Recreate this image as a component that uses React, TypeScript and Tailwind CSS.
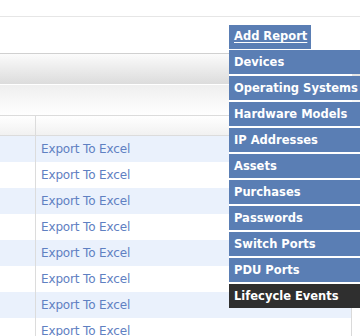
import type React from "react"

const menuItems = [
  "Devices",
  "Operating Systems",
  "Hardware Models",
  "IP Addresses",
  "Assets",
  "Purchases",
  "Passwords",
  "Switch Ports",
  "PDU Ports",
  "Lifecycle Events",
]

const App: React.FC = () => {
  const rows = Array.from({ length: 8 }, (_, i) => i)

  return (
    <div className="relative w-[360px] h-[336px] overflow-hidden bg-white font-['DejaVu_Sans',sans-serif]">
      {/* Top area */}
      <div className="h-[16px]" />
      <div className="h-[37px] border-t border-[#e6e6e6]" />

      {/* Toolbar bars */}
      <div className="h-[31px] border-t border-[#d0d0d0] bg-gradient-to-b from-[#fbfbfb] to-[#dcdcdc]" />
      <div className="h-[31px] border-t border-white bg-gradient-to-b from-[#efefef] to-white" />

      {/* Grid */}
      <div className="w-[352px] border-r border-[#dadada]">
        <div className="flex h-[21px] border-y border-[#dcdcdc] bg-gradient-to-b from-white to-[#f1f1f1]">
          <div className="w-[36px] border-r border-[#dcdcdc]" />
          <div className="flex-1" />
        </div>
        {rows.map((i) => (
          <div key={i} className={`flex h-[26px] ${i % 2 === 0 ? "bg-[#eaf1fc]" : "bg-white"}`}>
            <div className="w-[36px] border-r border-[#dcdcdc]" />
            <div className="flex-1 flex items-center pl-[5px]">
              <a className="text-[12px] tracking-[-0.15px] text-[#5f80c2] cursor-pointer">Export To Excel</a>
            </div>
          </div>
        ))}
      </div>

      {/* Add Report dropdown */}
      <div className="absolute left-[229px] top-[25px]">
        <div className="w-[82px] h-[24px] bg-[#5a7eb4] flex items-center pl-[5px]">
          <a className="text-[11.5px] font-bold text-white underline underline-offset-2 cursor-pointer">Add Report</a>
        </div>
        <div className="mt-[1px] w-[123px] bg-white flex flex-col gap-[2px]">
          {menuItems.map((item) => (
            <div
              key={item}
              className={`w-[131px] h-[24px] flex items-center pl-[5px] pt-[1px] whitespace-nowrap ${
                item === "Lifecycle Events" ? "bg-[#2f2f2f]" : "bg-[#5a7eb4]"
              }`}
            >
              <span className="text-[11.5px] font-bold text-white">{item}</span>
            </div>
          ))}
        </div>
      </div>
    </div>
  )
}

export default App
